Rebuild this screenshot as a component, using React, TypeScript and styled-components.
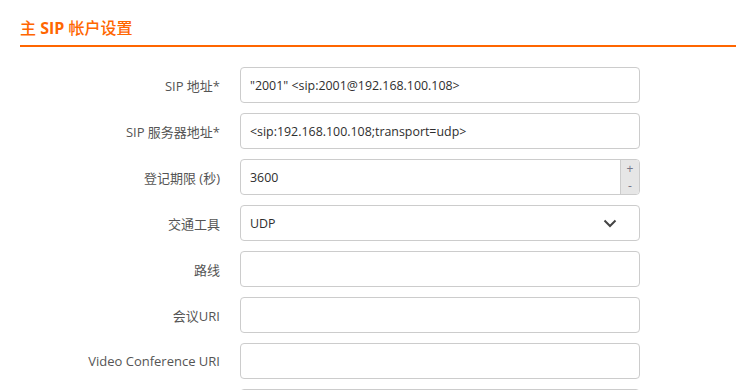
import React from 'react';
import styled, { createGlobalStyle } from 'styled-components';

const GlobalStyle = createGlobalStyle`
    body {
        margin: 0;
        background: #fff;
        font-family: 'Open Sans', 'Noto Sans CJK SC', sans-serif;
    }
`;

const Page = styled.div`
    padding: 18px 0 0 20px;
`;

const Heading = styled.div`
    font-size: 16px;
    line-height: 20px;
    font-weight: 500;
    color: #ff6600;
    padding-bottom: 7px;
    border-bottom: 2px solid #ff6600;
`;

const Strong = styled.span`
    font-weight: 700;
`;

const Form = styled.div`
    display: flex;
    flex-direction: column;
    gap: 10px;
    padding-top: 20px;
`;

const Row = styled.div`
    display: grid;
    grid-template-columns: 200px 400px;
    column-gap: 20px;
    align-items: center;
`;

const Label = styled.label`
    text-align: right;
    font-size: 13px;
    color: #555;
`;

const Field = styled.div`
    display: flex;
    align-items: stretch;
    box-sizing: border-box;
    height: 36px;
    border: 1px solid #ccc;
    border-radius: 4px;
    background: #fff;
    overflow: hidden;
`;

const Value = styled.div`
    flex: 1;
    display: flex;
    align-items: center;
    padding: 0 9px;
    font-size: 12.4px;
    color: #2e2e2e;
`;

const Spinner = styled.div`
    width: 18px;
    display: flex;
    flex-direction: column;
    background: #e6e6e6;
    border-left: 1px solid #ccc;
    font-size: 12px;
    color: #778;
`;

const SpinBtn = styled.div`
    flex: 1;
    display: flex;
    align-items: center;
    justify-content: center;
    line-height: 1;
`;

const Chevron = styled.div`
    display: flex;
    align-items: center;
    padding-right: 22px;
`;

interface RowProps {
    label: string;
    value?: string;
    kind?: 'text' | 'number' | 'select';
}

const FormRow = ({ label, value, kind = 'text' }: RowProps) => (
    <Row>
        <Label>{label}</Label>
        <Field>
            <Value>{value}</Value>
            {kind === 'number' && (
                <Spinner>
                    <SpinBtn>+</SpinBtn>
                    <SpinBtn>-</SpinBtn>
                </Spinner>
            )}
            {kind === 'select' && (
                <Chevron>
                    <svg width="14" height="9" viewBox="0 0 14 9">
                        <path
                            d="M1.5 1.5 L7 7 L12.5 1.5"
                            fill="none"
                            stroke="#444"
                            strokeWidth="2"
                        />
                    </svg>
                </Chevron>
            )}
        </Field>
    </Row>
);

export default function App() {
    return (
        <Page>
            <GlobalStyle />
            <Heading>
                主 <Strong>SIP</Strong> 帐户设置
            </Heading>
            <Form>
                <FormRow
                    label="SIP 地址*"
                    value={'"2001" <sip:2001@192.168.100.108>'}
                />
                <FormRow
                    label="SIP 服务器地址*"
                    value="<sip:192.168.100.108;transport=udp>"
                />
                <FormRow label="登记期限 (秒)" value="3600" kind="number" />
                <FormRow label="交通工具" value="UDP" kind="select" />
                <FormRow label="路线" />
                <FormRow label="会议URI" />
                <FormRow label="Video Conference URI" />
                <FormRow label="" />
            </Form>
        </Page>
    );
}
